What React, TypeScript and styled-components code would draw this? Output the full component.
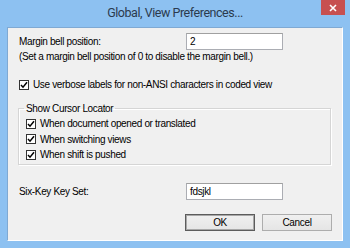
import React from "react";
import styled, { createGlobalStyle } from "styled-components";

const Global = createGlobalStyle`
  html, body { margin: 0; padding: 0; }
  body { width: 350px; height: 248px; overflow: hidden; background: #8cc0f0; }
  * { box-sizing: border-box; }
`;

const Window = styled.div`
  width: 350px;
  height: 248px;
  background: #8dc1f1;
  display: flex;
  flex-direction: column;
  font-family: "Liberation Sans", Arial, sans-serif;
  font-size: 10px;
  letter-spacing: -0.35px;
  color: #000;
`;

const TitleBar = styled.div`
  height: 27px;
  display: flex;
  align-items: flex-start;
  position: relative;
`;

const Title = styled.div`
  flex: 1;
  text-align: center;
  font-family: Roboto, "Liberation Sans", sans-serif;
  font-size: 12.5px;
  line-height: 26px;
  color: #2b3a4e;
  letter-spacing: -0.45px;
`;

const CloseButton = styled.div`
  position: absolute;
  top: 0;
  right: 5px;
  width: 24px;
  height: 15px;
  background: #c75050;
  display: flex;
  align-items: center;
  justify-content: center;
`;

const Panel = styled.div`
  flex: 1;
  margin: 0 7px 7px 7px;
  background: #f0f0f0;
  border-top: 1px solid #7fa9d3;
  border-left: 1px solid #7fa9d3;
  border-right: 1px solid #ffffff;
  border-bottom: 1px solid #ffffff;
  padding: 5px 11px 0 11px;
  display: flex;
  flex-direction: column;
`;

const FieldRow = styled.div<{ $mt?: number }>`
  display: grid;
  grid-template-columns: 167px 97px;
  align-items: center;
  height: 17px;
  margin-top: ${(p) => p.$mt ?? 0}px;
`;

const Label = styled.span`
  line-height: 13px;
`;

const TextBox = styled.div`
  height: 17px;
  background: #fff;
  border: 1px solid #abadb3;
  border-top-color: #a0a0a0;
  padding: 0 3px;
  line-height: 15px;
`;

const Hint = styled.div`
  line-height: 13px;
`;

const CheckRow = styled.label<{ $mt?: number }>`
  display: flex;
  align-items: center;
  gap: 4px;
  height: 13px;
  line-height: 13px;
  margin-top: ${(p) => p.$mt ?? 0}px;
`;

const Box = styled.span`
  width: 10px;
  height: 10px;
  background: #fff;
  border: 1px solid #333;
  display: inline-flex;
  align-items: center;
  justify-content: center;
  flex: none;
`;

const Group = styled.fieldset`
  margin: 11px 0 0 -1px;
  padding: 2px 0 3px 7px;
  border: 1px solid #d5d5d5;
  box-shadow: inset 1px 1px 0 #fff, 1px 1px 0 #fff;
  display: flex;
  flex-direction: column;
  gap: 2.5px;
  min-width: 0;
`;

const Legend = styled.legend`
  padding: 0 2px;
  margin-left: -2px;
  line-height: 13px;
`;

const ButtonRow = styled.div`
  display: flex;
  justify-content: flex-end;
  gap: 7px;
  margin-top: 14px;
  margin-right: -1px;
`;

const Button = styled.div<{ $default?: boolean }>`
  width: 70px;
  height: 17px;
  display: flex;
  align-items: center;
  justify-content: center;
  background: linear-gradient(#f0f0f0, #e5e5e5);
  border: 1px solid ${(p) => (p.$default ? "#5c5c5c" : "#adadad")};
  box-shadow: ${(p) => (p.$default ? "inset 0 0 0 1px #a8a8a8" : "none")};
`;

const Check = ({ label, mt }: { label: string; mt?: number }) => (
  <CheckRow $mt={mt}>
    <Box>
      <svg width="8" height="8" viewBox="0 0 8 8">
        <path d="M1 4 L3 6.2 L7 1.2" stroke="#000" strokeWidth="1.5" fill="none" />
      </svg>
    </Box>
    <span>{label}</span>
  </CheckRow>
);

export default function App() {
  return (
    <>
      <Global />
      <Window>
        <TitleBar>
          <Title>Global, View Preferences...</Title>
          <CloseButton>
            <svg width="8" height="8" viewBox="0 0 8 8">
              <path d="M1 1 L7 7 M7 1 L1 7" stroke="#fff" strokeWidth="1.6" />
            </svg>
          </CloseButton>
        </TitleBar>
        <Panel>
          <FieldRow>
            <Label>Margin bell position:</Label>
            <TextBox>2</TextBox>
          </FieldRow>
          <Hint>(Set a margin bell position of 0 to disable the margin bell.)</Hint>
          <Check label="Use verbose labels for non-ANSI characters in coded view" mt={15} />
          <Group>
            <Legend>Show Cursor Locator</Legend>
            <Check label="When document opened or translated" />
            <Check label="When switching views" />
            <Check label="When shift is pushed" />
          </Group>
          <FieldRow $mt={18}>
            <Label>Six-Key Key Set:</Label>
            <TextBox>fdsjkl</TextBox>
          </FieldRow>
          <ButtonRow>
            <Button $default>OK</Button>
            <Button>Cancel</Button>
          </ButtonRow>
        </Panel>
      </Window>
    </>
  );
}
